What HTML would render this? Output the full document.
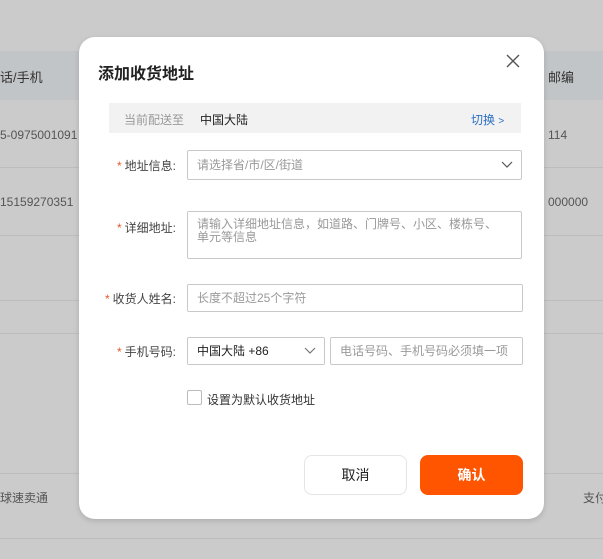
<!DOCTYPE html>
<html><head><meta charset="utf-8"><style>
*{box-sizing:border-box;margin:0;padding:0}
body{width:603px;height:559px;background:#cbcbcb;position:relative;overflow:hidden;font-family:"Liberation Sans","Noto Sans CJK SC",sans-serif;font-size:12px;color:#333}
.a{position:absolute;white-space:nowrap}
.hl{position:absolute;left:0;width:603px;height:1px;background:#bdbdbd}
.bt{position:absolute;color:#555;font-size:12px;white-space:nowrap}
.modal{position:absolute;left:79px;top:37px;width:465px;height:482px;background:#fff;border-radius:16px;box-shadow:0 2px 6px rgba(0,0,0,.15)}
.inp{position:absolute;border:1px solid #c9c9c9;border-radius:2px;background:#fff;color:#999;font-size:12px;padding-left:9px;white-space:nowrap}
.lab{position:absolute;font-size:12px;color:#444;text-align:right;width:95px}
.lab i{color:#e4572e;font-style:normal;margin-right:3px}
</style></head><body>
<div class="a" style="left:0;top:51px;width:603px;height:49px;background:#c2c5c7"></div>
<div class="hl" style="top:167px"></div>
<div class="hl" style="top:235px"></div>
<div class="hl" style="top:300px"></div>
<div class="hl" style="top:333px"></div>
<div class="hl" style="top:473px"></div>
<div class="hl" style="top:538px"></div>
<div class="bt" style="left:0;top:67px;font-size:13px;color:#333">话/手机</div>
<div class="bt" style="left:548px;top:67px;font-size:13px;color:#333">邮编</div>
<div class="bt" style="left:0;top:128px">5-0975001091</div>
<div class="bt" style="left:548px;top:128px">114</div>
<div class="bt" style="left:0;top:195px">15159270351</div>
<div class="bt" style="left:548px;top:195px">000000</div>
<div class="bt" style="left:0;top:489px">球速卖通</div>
<div class="bt" style="left:583px;top:489px">支付</div>

<div class="modal">
<div class="a" style="left:19px;top:23px;font-size:16px;color:#222;font-weight:bold">添加收货地址</div>
<svg class="a" style="left:427px;top:17px" width="14" height="14" viewBox="0 0 14 14"><path d="M1 1L13 13M13 1L1 13" stroke="#555" stroke-width="1.4"/></svg>
<div class="a" style="left:30px;top:66px;width:412px;height:30px;background:#f2f2f2"></div>
<div class="a" style="left:45px;top:74px;color:#999">当前配送至</div>
<div class="a" style="left:121px;top:74px;color:#222">中国大陆</div>
<div class="a" style="left:392px;top:74px;color:#2b6fc4">切换 <span style="font-size:10px">&gt;</span></div>

<div class="lab" style="left:2px;top:120px"><i>*</i>地址信息:</div>
<div class="inp" style="left:108px;top:113px;width:335px;height:30px;line-height:28px">请选择省/市/区/街道
<svg class="a" style="right:8px;top:10px" width="12" height="8" viewBox="0 0 12 8"><path d="M1 1L6 6L11 1" stroke="#555" fill="none" stroke-width="1.2"/></svg></div>

<div class="lab" style="left:2px;top:182px"><i>*</i>详细地址:</div>
<div class="inp" style="left:108px;top:174px;width:335px;height:48px;padding-top:6px;padding-right:20px;line-height:13px;white-space:normal">请输入详细地址信息，如道路、门牌号、小区、楼栋号、单元等信息</div>

<div class="lab" style="left:2px;top:253px"><i>*</i>收货人姓名:</div>
<div class="inp" style="left:108px;top:247px;width:336px;height:28px;line-height:26px">长度不超过25个字符</div>

<div class="lab" style="left:2px;top:306px"><i>*</i>手机号码:</div>
<div class="inp" style="left:108px;top:300px;width:138px;height:28px;line-height:26px;color:#222">中国大陆 +86
<svg class="a" style="right:8px;top:9px" width="12" height="8" viewBox="0 0 12 8"><path d="M1 1L6 6L11 1" stroke="#777" fill="none" stroke-width="1.2"/></svg></div>
<div class="inp" style="left:251px;top:300px;width:193px;height:28px;line-height:26px">电话号码、手机号码必须填一项</div>

<div class="a" style="left:108px;top:353px;width:15px;height:15px;border:1px solid #bbb;border-radius:2px"></div>
<div class="a" style="left:128px;top:354px;color:#333">设置为默认收货地址</div>

<div class="a" style="left:225px;top:418px;width:103px;height:40px;border:1px solid #e4e4e4;border-radius:8px;text-align:center;line-height:38px;font-size:14px;color:#222">取消</div>
<div class="a" style="left:341px;top:418px;width:103px;height:40px;background:#ff5500;border-radius:8px;text-align:center;line-height:40px;font-size:14px;color:#fff;font-weight:bold">确认</div>
</div>
</body></html>
